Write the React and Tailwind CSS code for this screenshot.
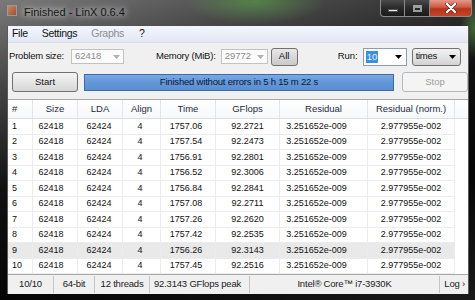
import React from "react";

const rows = [
  [1, "1757.06", "92.2721"],
  [2, "1757.54", "92.2473"],
  [3, "1756.91", "92.2801"],
  [4, "1756.52", "92.3006"],
  [5, "1756.84", "92.2841"],
  [6, "1757.08", "92.2711"],
  [7, "1757.26", "92.2620"],
  [8, "1757.42", "92.2535"],
  [9, "1756.26", "92.3143"],
  [10, "1757.45", "92.2516"],
];

const grid = "grid grid-cols-[25px_45px_45px_38px_55px_64px_88px_87px_1fr]";

function Arrow({ color = "#000" }) {
  return (
    <svg width="7" height="4" viewBox="0 0 7 4" className="shrink-0">
      <path d="M0 0 L7 0 L3.5 4 Z" fill={color} />
    </svg>
  );
}

export default function App() {
  return (
    <div className="w-[475px] h-[300px] overflow-hidden flex flex-col font-['Liberation_Sans',Arial,sans-serif] bg-[radial-gradient(ellipse_70px_22px_at_255px_2px,rgba(90,170,70,0.55),transparent),radial-gradient(ellipse_14px_30px_at_474px_28px,rgba(90,170,70,0.5),transparent),linear-gradient(165deg,#7a7a7a_0%,#4a4a4a_18%,#101010_45%,#050505_70%,#1a1a1a_100%)]">
      {/* Title bar */}
      <div className="h-[26px] shrink-0 flex items-start relative">
        <div className="mt-[5px] ml-[7px] w-[10px] h-[11px] border border-[#9a9a9a] bg-[linear-gradient(135deg,#d0855a,#9a5236)]" />
        <div className="mt-[5px] ml-[7px] text-[11px] leading-[14px] text-[#151515] [text-shadow:0_0_6px_rgba(255,255,255,0.85),0_0_10px_rgba(255,255,255,0.6)]">
          Finished - LinX 0.6.4
        </div>
        <div className="ml-auto mr-[3px] flex h-[17px]">
          <div className="w-[25px] h-full border border-[#8c8c8c] border-t-0 rounded-bl-[4px] bg-[linear-gradient(#4a4a4a,#2a2a2a_50%,#1a1a1a)] flex items-end justify-center pb-[4px]">
            <div className="w-[10px] h-[3px] bg-[#e8e8e8] border border-[#555]" />
          </div>
          <div className="w-[24px] h-full border-y border-[#8c8c8c] border-t-0 bg-[linear-gradient(#4a4a4a,#2a2a2a_50%,#1a1a1a)] flex items-center justify-center">
            <div className="w-[9px] h-[7px] border-[2px] border-[#cfcfcf] border-t-[3px] opacity-70" />
          </div>
          <div className="w-[43px] h-full border border-[#8c8c8c] border-t-0 rounded-br-[4px] bg-[linear-gradient(#e6998a,#cf5a40_45%,#b8321a_55%,#c4452a)] flex items-center justify-center">
            <svg width="12" height="10" viewBox="0 0 12 10">
              <path d="M2 1 L10 9 M10 1 L2 9" stroke="#5a1a10" strokeWidth="3.6" strokeLinecap="round" />
              <path d="M2 1 L10 9 M10 1 L2 9" stroke="#fff" strokeWidth="2.4" strokeLinecap="round" />
            </svg>
          </div>
        </div>
      </div>

      {/* Middle frame + client */}
      <div className="flex h-[268px] shrink-0">
        <div className="w-[7px] shrink-0" />
        <div className="w-[462px] shrink-0 flex flex-col bg-[#f0f0f0] border-x border-[#5a5a5a]">
          {/* Menu */}
          <div className="h-[17px] flex items-center text-[10.5px] text-[#111] bg-[linear-gradient(#f3f6fc,#e2e8f4)] border-b border-[#d8dde8] tracking-[-0.3px]">
            <span className="ml-[4px]">File</span>
            <span className="ml-[14px]">Settings</span>
            <span className="ml-[14px] text-[#8d8d8d]">Graphs</span>
            <span className="ml-[15px]">?</span>
          </div>

          {/* Row 1 */}
          <div className="mt-[4px] h-[19px] flex items-center text-[9.5px] text-[#111]">
            <span className="ml-[1px] tracking-[-0.2px]">Problem size:</span>
            <div className="ml-[7px] w-[53px] h-[15px] border border-[#c2c2c2] bg-[#fbfbfb] flex items-center px-[3px] text-[#8c8c8c]">
              <span>62418</span>
              <span className="ml-auto"><Arrow color="#b0b0b0" /></span>
            </div>
            <span className="ml-[32px] tracking-[-0.2px]">Memory (MiB):</span>
            <div className="ml-[5px] w-[47px] h-[15px] border border-[#c2c2c2] bg-[#fbfbfb] flex items-center px-[3px] text-[#8c8c8c]">
              <span>29772</span>
              <span className="ml-auto"><Arrow color="#b0b0b0" /></span>
            </div>
            <div className="ml-[3px] w-[27px] h-[18px] rounded-[3px] border border-[#707070] bg-[linear-gradient(#e8e8e8,#d8d8d8_50%,#cacaca)] flex items-center justify-center">
              All
            </div>
            <span className="ml-[40px]">Run:</span>
            <div className="ml-[5px] w-[44px] h-[18px] border border-[#8e9cae] bg-white flex items-center pl-[2px] pr-[4px]">
              <span className="bg-[#3d8ee0] text-[#eaf3ff] px-[1px] leading-[12px]">10</span>
              <span className="ml-auto"><Arrow /></span>
            </div>
            <div className="ml-[5px] w-[49px] h-[18px] rounded-[3px] border border-[#707070] bg-[linear-gradient(#f2f2f2,#e4e4e4_50%,#d2d2d2)] flex items-center pl-[3px] pr-[4px]">
              <span className="tracking-[-0.3px]">times</span>
              <span className="ml-auto"><Arrow /></span>
            </div>
          </div>

          {/* Row 2 */}
          <div className="mt-[6px] h-[20px] flex items-center text-[9.5px] text-[#111]">
            <div className="ml-[4px] w-[66px] h-[20px] rounded-[3px] border border-[#707070] bg-[linear-gradient(#f4f4f4,#e6e6e6_50%,#d6d6d6)] flex items-center justify-center">
              Start
            </div>
            <div className="ml-[6px] w-[310px] h-[17px] border border-[#3c6aa6] bg-[linear-gradient(#7aa8e2,#6497d8_50%,#5b8ed0)] flex items-center justify-center text-[#0a1838] tracking-[-0.2px]">
              Finished without errors in 5 h 15 m 22 s
            </div>
            <div className="ml-[8px] w-[66px] h-[20px] rounded-[3px] border border-[#b5b9bc] bg-[#f4f4f4] flex items-center justify-center text-[#9d9d9d]">
              Stop
            </div>
          </div>

          {/* Table */}
          <div className="mt-[7px] h-[176px] border-y border-[#a8a8a8] bg-white text-[9px] flex flex-col">
            <div className={`${grid} h-[19px] text-[9.5px] bg-[linear-gradient(#ffffff,#f7f8fa)] border-b border-[#dadde2] text-[#1f2b3b]`}>
              {["#", "Size", "LDA", "Align", "Time", "GFlops", "Residual", "Residual (norm.)", ""].map((h, i) => (
                <div
                  key={i}
                  className={`flex items-center border-r border-[#e2e4e8] ${i === 0 ? "pl-[4px]" : "justify-center"} ${i === 8 ? "border-r-0" : ""}`}
                >
                  {h}
                </div>
              ))}
            </div>
            {rows.map(([n, time, gf]) => (
              <div key={n} className={`${grid} h-[15.5px] text-[#111]`}>
                {[
                  [String(n), "pl-[4px]"],
                  ["62418", "justify-center pr-[8px]"],
                  ["62424", "justify-center pr-[2px]"],
                  ["4", "justify-center pr-[3px]"],
                  [time, "justify-center pr-[4px]"],
                  [gf, "justify-center"],
                  ["3.251652e-009", "justify-center pr-[14px]"],
                  ["2.977955e-002", "justify-center"],
                ].map(([t, c], i) => (
                  <div
                    key={i}
                    className={`flex items-center border-r border-b border-[#ececec] ${c} ${n === 9 ? "bg-[#e9e9e9]" : ""}`}
                  >
                    {t}
                  </div>
                ))}
                <div />
              </div>
            ))}
          </div>

          {/* Status bar */}
          <div className="mt-[1px] h-[17px] flex items-stretch text-[9.5px] text-[#1a1a1a] tracking-[-0.2px]">
            <div className="w-[46px] flex items-center justify-center border-r border-[#c4c4c4]">10/10</div>
            <div className="w-[41px] flex items-center justify-center border-r border-[#c4c4c4]">64-bit</div>
            <div className="w-[55px] flex items-center justify-center border-r border-[#c4c4c4]">12 threads</div>
            <div className="w-[100px] flex items-center pl-[4px] border-r border-[#c4c4c4] whitespace-nowrap overflow-hidden">92.3143 GFlops peak</div>
            <div className="w-[190px] flex items-center justify-center border-r border-[#c4c4c4]">Intel® Core™ i7-3930K</div>
            <div className="flex-1 flex items-center justify-end pr-[3px]">Log ›</div>
          </div>
        </div>
        <div className="flex-1" />
      </div>
      <div className="flex-1" />
    </div>
  );
}
